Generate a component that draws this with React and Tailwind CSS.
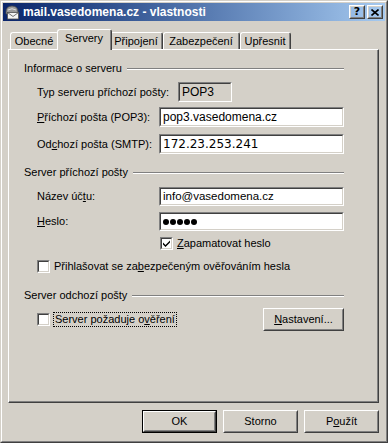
import React from "react";

// Klasický vzhled Windows: vystouplé a zapuštěné rámečky
const Raised = ({ className = "", children, isDefault = false }) => {
  const bevel = (
    <div className="h-full w-full border border-t-white border-l-white border-r-[#404040] border-b-[#404040]">
      <div className="h-full w-full border border-t-[#d4d0c8] border-l-[#d4d0c8] border-r-[#808080] border-b-[#808080] flex items-center justify-center">
        {children}
      </div>
    </div>
  );
  if (isDefault) {
    return <div className={`border border-black ${className}`}>{bevel}</div>;
  }
  return <div className={className}>{bevel}</div>;
};

const Sunken = ({ className = "", bg = "bg-white", children }) => (
  <div className={`border border-t-[#808080] border-l-[#808080] border-r-white border-b-white ${className}`}>
    <div className={`h-full w-full border border-t-[#404040] border-l-[#404040] border-r-[#d4d0c8] border-b-[#d4d0c8] flex items-center ${bg}`}>
      {children}
    </div>
  </div>
);

const Checkbox = ({ checked }) => (
  <Sunken className="w-[13px] h-[13px] shrink-0">
    {checked && (
      <svg width="9" height="9" viewBox="0 0 9 9" className="block">
        <path d="M1 3.5 L3.5 6 L8 1.5 L8 3.5 L3.5 8 L1 5.5 Z" fill="#000" />
      </svg>
    )}
  </Sunken>
);

const GroupHeader = ({ title, className = "" }) => (
  <div className={`flex items-center h-[13px] pl-[15px] pr-[33px] ${className}`}>
    <span className="whitespace-nowrap leading-[13px]">{title}</span>
    <div className="flex-1 ml-[5px] border-t border-t-[#808080] border-b border-b-white" />
  </div>
);

const TitleIcon = () => (
  <svg width="16" height="16" viewBox="0 0 16 16" className="block">
    <path d="M2 8 Q2 2 8 2 Q14 2 14 8 L14 10 L2 10 Z" fill="#9a9a9a" stroke="#4a4a4a" strokeWidth="0.8" />
    <path d="M4 6 Q8 3.5 12 6" stroke="#dcdcdc" strokeWidth="1" fill="none" />
    <rect x="3.5" y="8.5" width="11" height="6.5" fill="#f4f4f4" stroke="#505050" strokeWidth="0.8" />
    <path d="M3.5 8.5 L9 12.5 L14.5 8.5" stroke="#505050" strokeWidth="0.8" fill="none" />
  </svg>
);

const tabs = [
  { label: "Obecné", w: "w-[49px]" },
  { label: "Servery", w: "w-[55px]", active: true },
  { label: "Připojení", w: "w-[53px]" },
  { label: "Zabezpečení", w: "w-[77px]" },
  { label: "Upřesnit", w: "w-[51px]" },
];

const Dots = () => (
  <div className="flex gap-[1px] pl-[2px]">
    {[0, 1, 2, 3, 4].map((i) => (
      <span key={i} className="w-[6px] h-[6px] rounded-full bg-black" />
    ))}
  </div>
);

export default function App() {
  return (
    <div className="w-[388px] h-[443px] bg-[#d4d0c8] font-['Liberation_Sans',Arial,sans-serif] text-[11px] text-black select-none">
      <div className="h-full w-full border border-t-[#d4d0c8] border-l-[#d4d0c8] border-r-[#404040] border-b-[#404040]">
        <div className="h-full w-full border border-t-white border-l-white border-r-[#808080] border-b-[#808080] p-px flex flex-col">
          {/* titulek okna */}
          <div className="h-[18px] flex items-center bg-linear-to-r from-[#0a246a] to-[#a6caf0] pl-px pr-[2px]">
            <TitleIcon />
            <span className="ml-[3px] text-white font-bold text-[12px] leading-[14px] whitespace-nowrap">
              mail.vasedomena.cz - vlastnosti
            </span>
            <div className="ml-auto flex gap-[2px]">
              <Raised className="w-[16px] h-[14px]">
                <span className="font-bold text-[11px] leading-[10px] font-['DejaVu_Sans',sans-serif]">?</span>
              </Raised>
              <Raised className="w-[16px] h-[14px]">
                <svg width="8" height="7" viewBox="0 0 8 7" className="block">
                  <path d="M0.5 0.5 L7.5 6.5 M7.5 0.5 L0.5 6.5" stroke="#000" strokeWidth="1.6" />
                </svg>
              </Raised>
            </div>
          </div>

          {/* záložky */}
          <div className="mt-[8px] ml-[5px] h-[20px] flex items-end pl-[2px]">
            {tabs.map((t) =>
              t.active ? (
                <div
                  key={t.label}
                  className={`relative z-10 -mx-[2px] -mb-px h-[21px] ${t.w} bg-[#d4d0c8] border-t border-l border-t-white border-l-white border-r border-r-[#404040] rounded-t-[3px]`}
                >
                  <div className="h-full border-r border-r-[#808080] pt-[2px] text-center leading-[13px]">
                    {t.label}
                  </div>
                </div>
              ) : (
                <div
                  key={t.label}
                  className={`h-[17px] ${t.w} border-t border-l border-t-white border-l-white border-r border-r-[#404040] rounded-t-[3px]`}
                >
                  <div className="h-full border-r border-r-[#808080] pt-[2px] text-center leading-[13px]">
                    {t.label}
                  </div>
                </div>
              )
            )}
          </div>

          {/* panel */}
          <div className="ml-[5px] mr-[6px] h-[354px] border-t border-l border-t-white border-l-white border-r border-b border-r-[#404040] border-b-[#404040]">
            <div className="h-full border-r border-b border-r-[#808080] border-b-[#808080] flex flex-col">
              <GroupHeader title="Informace o serveru" className="mt-[12px]" />

              <div className="mt-[7px] h-[20px] flex items-center pl-[28px]">
                <div className="w-[141px] whitespace-nowrap">Typ serveru příchozí pošty:</div>
                <Sunken className="w-[54px] h-[20px]" bg="bg-[#d4d0c8]">
                  <span className="pl-[2px] text-[12px]">POP3</span>
                </Sunken>
              </div>

              <div className="mt-[5px] h-[20px] flex items-center pl-[28px]">
                <div className="w-[122px] whitespace-nowrap">
                  <span className="underline">P</span>říchozí pošta (POP3):
                </div>
                <Sunken className="w-[185px] h-[20px]">
                  <span className="pl-[2px] text-[12px]">pop3.vasedomena.cz</span>
                </Sunken>
              </div>

              <div className="mt-[7px] h-[20px] flex items-center pl-[28px]">
                <div className="w-[122px] whitespace-nowrap">
                  Od<span className="underline">c</span>hozí pošta (SMTP):
                </div>
                <Sunken className="w-[185px] h-[20px]">
                  <span className="pl-[2px] text-[12px] font-['DejaVu_Sans',sans-serif]">172.23.253.241</span>
                </Sunken>
              </div>

              <GroupHeader title="Server příchozí pošty" className="mt-[12px]" />

              <div className="mt-[8px] h-[19px] flex items-center pl-[28px]">
                <div className="w-[122px] whitespace-nowrap">
                  Název úč<span className="underline">t</span>u:
                </div>
                <Sunken className="w-[185px] h-[19px]">
                  <span className="pl-[2px] text-[11.5px]">info@vasedomena.cz</span>
                </Sunken>
              </div>

              <div className="mt-[6px] h-[19px] flex items-center pl-[28px]">
                <div className="w-[122px] whitespace-nowrap">
                  <span className="underline">H</span>eslo:
                </div>
                <Sunken className="w-[185px] h-[19px]">
                  <Dots />
                </Sunken>
              </div>

              <div className="mt-[6px] h-[13px] flex items-center pl-[151px]">
                <Checkbox checked />
                <span className="ml-[4px] whitespace-nowrap">
                  <span className="underline">Z</span>apamatovat heslo
                </span>
              </div>

              <div className="mt-[10px] h-[13px] flex items-center pl-[28px]">
                <Checkbox />
                <span className="ml-[4px] whitespace-nowrap">
                  Přihlašovat se za<span className="underline">b</span>ezpečeným ověřováním hesla
                </span>
              </div>

              <GroupHeader title="Server odchozí pošty" className="mt-[16px]" />

              <div className="mt-[6px] h-[23px] flex items-center pl-[28px] pr-[33px]">
                <Checkbox />
                <span className="ml-[3px] border border-dotted border-black px-[1px] leading-[13px] whitespace-nowrap">
                  Server požaduje o<span className="underline">v</span>ěření
                </span>
                <Raised className="ml-auto w-[81px] h-[23px]">
                  <span>
                    <span className="underline">N</span>astavení...
                  </span>
                </Raised>
              </div>
            </div>
          </div>

          {/* tlačítka dialogu */}
          <div className="mt-[7px] mr-[6px] flex justify-end gap-[6px]">
            <Raised isDefault className="w-[75px] h-[23px]">
              <span>OK</span>
            </Raised>
            <Raised className="w-[75px] h-[23px]">
              <span>Storno</span>
            </Raised>
            <Raised className="w-[75px] h-[23px]">
              <span>
                P<span className="underline">o</span>užít
              </span>
            </Raised>
          </div>
        </div>
      </div>
    </div>
  );
}
